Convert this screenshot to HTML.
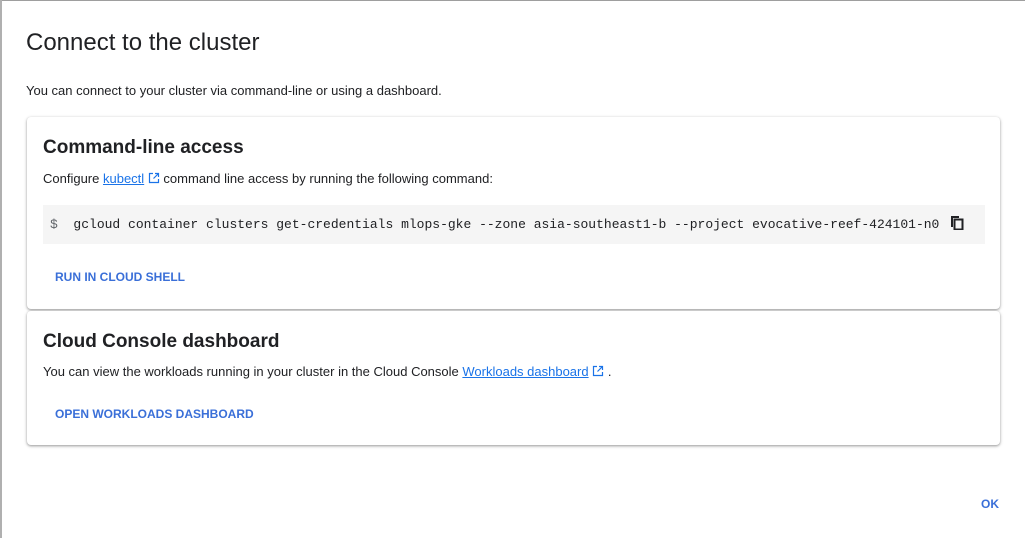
<!DOCTYPE html>
<html><head><style>
*{box-sizing:border-box;margin:0;padding:0}
body{width:1025px;height:538px;overflow:hidden;background:#fff;font-family:"Liberation Sans",sans-serif;color:#202124;position:relative}
.topline{position:absolute;left:0;top:0;width:1025px;height:1px;background:#9e9e9e}
.leftline{position:absolute;left:0;top:0;width:2px;height:538px;background:#b0b0b0}
h1{position:absolute;left:26px;top:29px;font-size:24px;font-weight:400;color:#202124}
.intro{position:absolute;left:26px;top:83px;font-size:13px}
.card{position:absolute;left:27px;width:973px;background:#fff;border-radius:4px;box-shadow:0 1px 2px rgba(0,0,0,.3),0 1px 3px 1px rgba(0,0,0,.1)}
h2{position:absolute;left:16px;font-size:19px;font-weight:700;color:#202124}
.p{position:absolute;left:16px;font-size:13px}
a{color:#1a73e8;text-decoration:underline}
.code{position:absolute;left:16px;top:88px;width:942px;height:39px;background:#f5f5f5;font-family:"Liberation Mono",monospace;font-size:13px;line-height:39px;padding-left:7px;color:#202124;white-space:nowrap}
.btn{position:absolute;left:28px;font-size:12px;font-weight:700;color:#3a6fd8}
.ext{display:inline-block;vertical-align:-1px}
</style></head><body>
<div class="topline"></div><div class="leftline"></div>
<h1>Connect to the cluster</h1>
<div class="intro">You can connect to your cluster via command-line or using a dashboard.</div>
<div class="card" style="top:117px;height:192px">
<h2 style="top:20px">Command-line access</h2>
<div class="p" style="top:54px">Configure <a>kubectl</a> <svg class="ext" width="12" height="12" viewBox="0 0 12 12"><path d="M5 1.5H1.5v9h9V7M7 1.5h3.5V5M10.5 1.5L5.5 6.5" fill="none" stroke="#1a73e8" stroke-width="1.2"/></svg> command line access by running the following command:</div>
<div class="code"><span style="color:#5f6368">$</span>&nbsp;&nbsp;gcloud container clusters get-credentials mlops-gke --zone asia-southeast1-b --project evocative-reef-424101-n0
<svg style="position:absolute;left:907px;top:10px" width="14" height="15" viewBox="0 0 14 15"><path d="M1 1h8v2H3v9H1z" fill="#202124"/><path d="M4.5 4.5h8v10h-8z" fill="none" stroke="#202124" stroke-width="2"/></svg></div>
<div class="btn" style="top:153px">RUN IN CLOUD SHELL</div>
</div>
<div class="card" style="top:311px;height:134px">
<h2 style="top:20px">Cloud Console dashboard</h2>
<div class="p" style="top:53px">You can view the workloads running in your cluster in the Cloud Console <a>Workloads dashboard</a> <svg class="ext" width="12" height="12" viewBox="0 0 12 12"><path d="M5 1.5H1.5v9h9V7M7 1.5h3.5V5M10.5 1.5L5.5 6.5" fill="none" stroke="#1a73e8" stroke-width="1.2"/></svg> .</div>
<div class="btn" style="top:96px">OPEN WORKLOADS DASHBOARD</div>
</div>
<div class="btn" style="left:981px;top:497px">OK</div>
</body></html>
